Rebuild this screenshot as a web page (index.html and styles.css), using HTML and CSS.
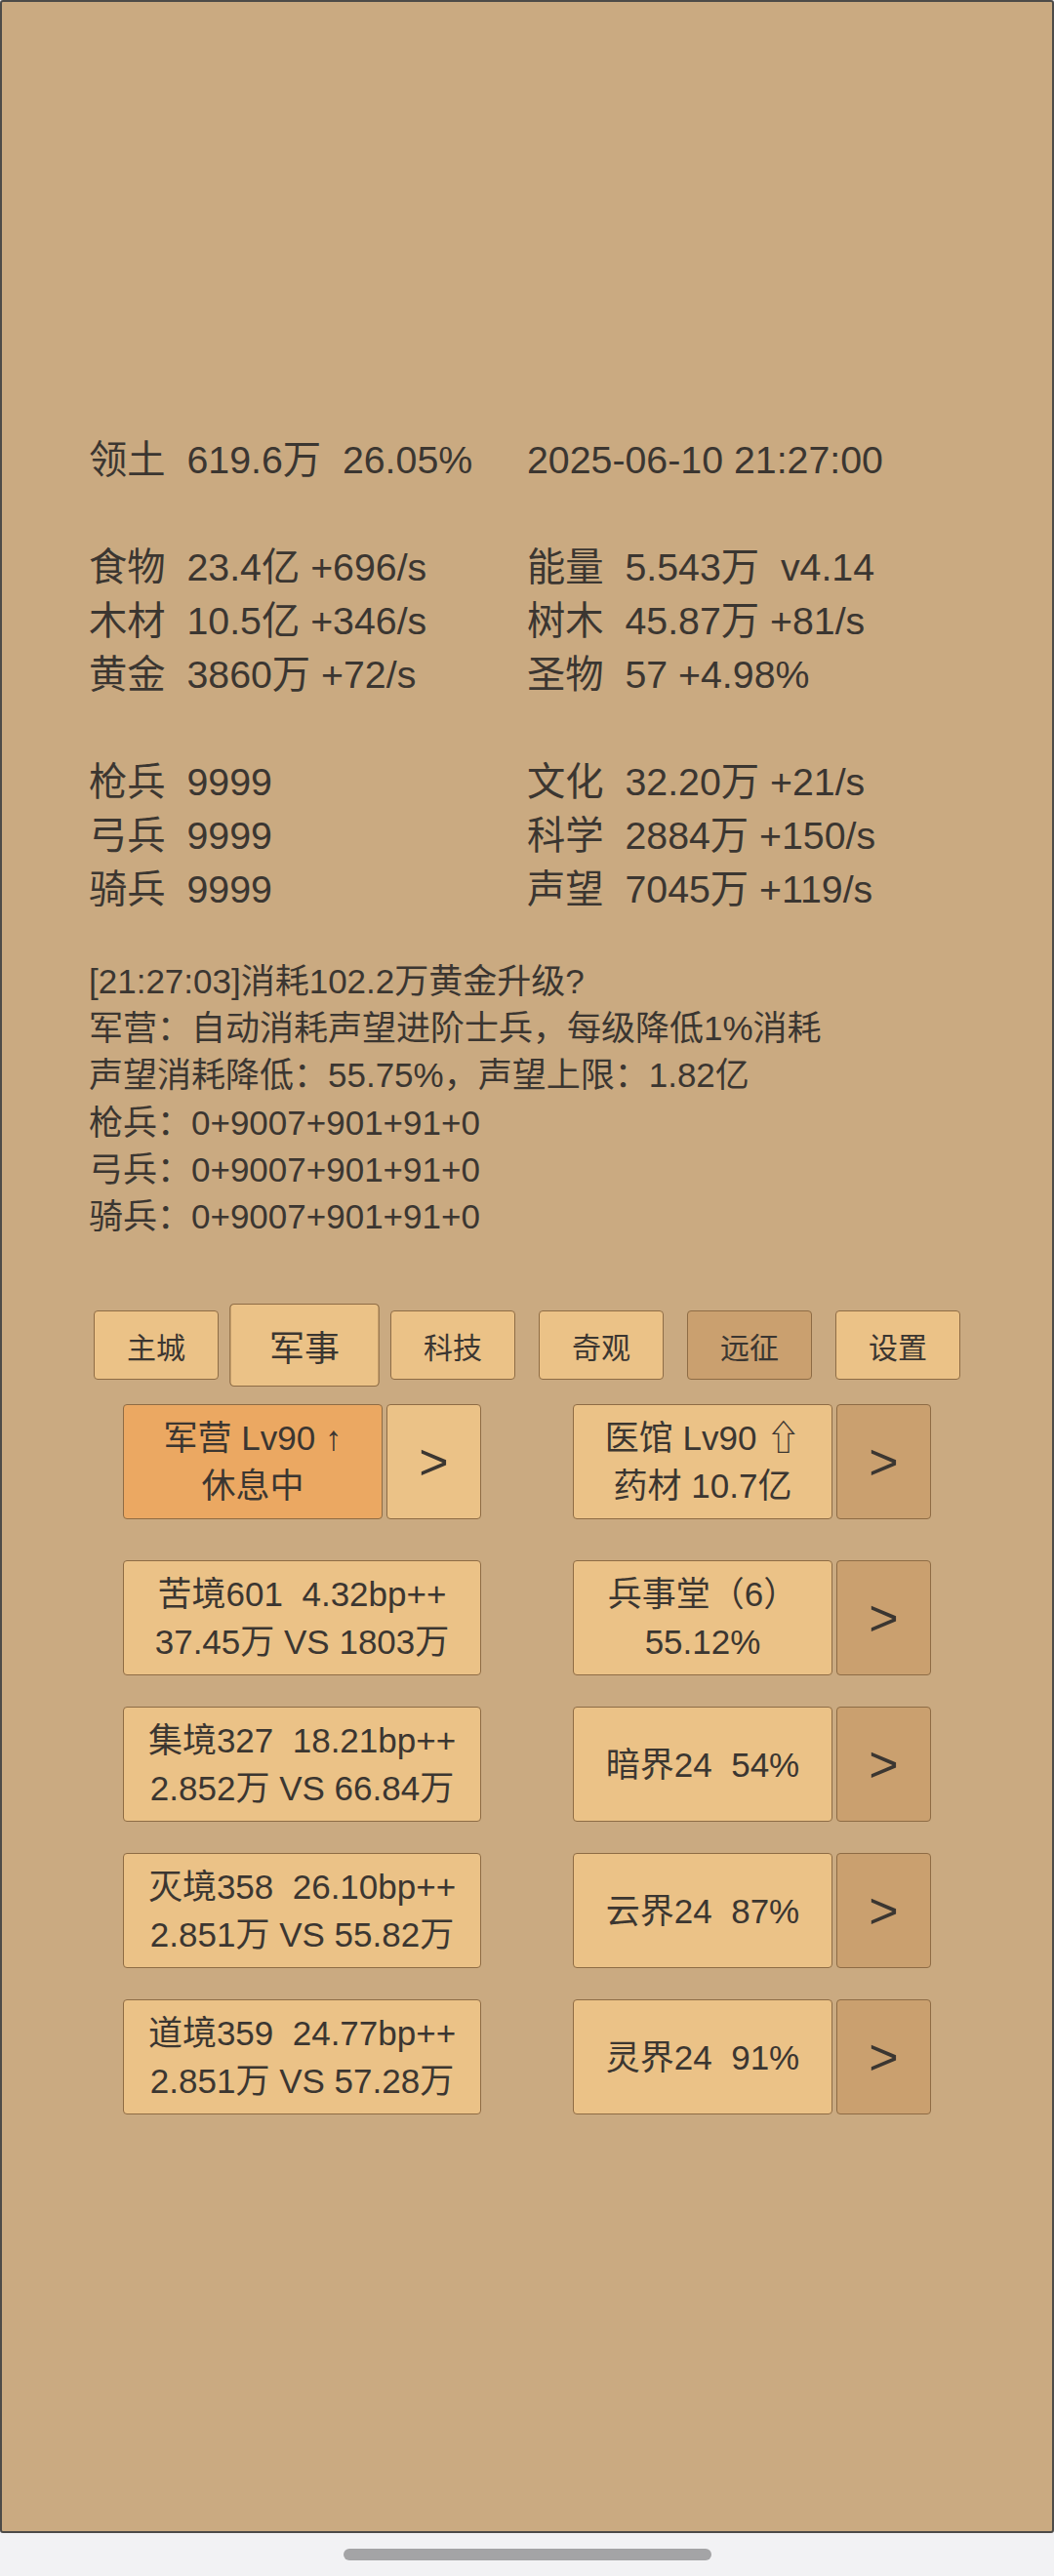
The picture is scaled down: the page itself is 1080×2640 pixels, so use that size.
FILE: index.html
```html
<!DOCTYPE html>
<html lang="zh-CN">
<head>
<meta charset="utf-8">
<title>军事</title>
<link rel="stylesheet" href="styles.css">
</head>
<body>
<div class="panel">
  <div class="stats">
    <div class="row"><span>领土  619.6万  26.05%</span><span>2025-06-10 21:27:00</span></div>
    <div class="row blank"></div>
    <div class="row"><span>食物  23.4亿 +696/s</span><span>能量  5.543万  v4.14</span></div>
    <div class="row"><span>木材  10.5亿 +346/s</span><span>树木  45.87万 +81/s</span></div>
    <div class="row"><span>黄金  3860万 +72/s</span><span>圣物  57 +4.98%</span></div>
    <div class="row blank"></div>
    <div class="row"><span>枪兵  9999</span><span>文化  32.20万 +21/s</span></div>
    <div class="row"><span>弓兵  9999</span><span>科学  2884万 +150/s</span></div>
    <div class="row"><span>骑兵  9999</span><span>声望  7045万 +119/s</span></div>
  </div>

  <div class="log">
    <div>[21:27:03]消耗102.2万黄金升级?</div>
    <div>军营：自动消耗声望进阶士兵，每级降低1%消耗</div>
    <div>声望消耗降低：55.75%，声望上限：1.82亿</div>
    <div>枪兵：0+9007+901+91+0</div>
    <div>弓兵：0+9007+901+91+0</div>
    <div>骑兵：0+9007+901+91+0</div>
  </div>

  <div class="tabs">
    <div class="tab">主城</div>
    <div class="tab active">军事</div>
    <div class="tab">科技</div>
    <div class="tab">奇观</div>
    <div class="tab dim">远征</div>
    <div class="tab">设置</div>
  </div>

  <div class="buildings">
    <div class="group first">
      <div class="box orange"><div>军营 Lv90 ↑</div><div>休息中</div></div>
      <div class="arrow">&gt;</div>
    </div>
    <div class="group first">
      <div class="box"><div>医馆 Lv90 ⇧</div><div>药材 10.7亿</div></div>
      <div class="arrow dark">&gt;</div>
    </div>

    <div class="group">
      <div class="box"><div>苦境601  4.32bp++</div><div>37.45万 VS 1803万</div></div>
    </div>
    <div class="group">
      <div class="box"><div>兵事堂（6）</div><div>55.12%</div></div>
      <div class="arrow dark">&gt;</div>
    </div>

    <div class="group">
      <div class="box"><div>集境327  18.21bp++</div><div>2.852万 VS 66.84万</div></div>
    </div>
    <div class="group">
      <div class="box"><div>暗界24  54%</div></div>
      <div class="arrow dark">&gt;</div>
    </div>

    <div class="group">
      <div class="box"><div>灭境358  26.10bp++</div><div>2.851万 VS 55.82万</div></div>
    </div>
    <div class="group">
      <div class="box"><div>云界24  87%</div></div>
      <div class="arrow dark">&gt;</div>
    </div>

    <div class="group">
      <div class="box"><div>道境359  24.77bp++</div><div>2.851万 VS 57.28万</div></div>
    </div>
    <div class="group">
      <div class="box"><div>灵界24  91%</div></div>
      <div class="arrow dark">&gt;</div>
    </div>
  </div>
</div>
<div class="navbar"><div class="pill"></div></div>
</body>
</html>
```
FILE: styles.css
```css
* { box-sizing: border-box; }

html, body {
  margin: 0;
  padding: 0;
}

body {
  width: 1080px;
  height: 2640px;
  background: #f2f2f4;
  font-family: "Liberation Sans", "Noto Sans CJK SC", sans-serif;
  color: #3b3631;
  overflow: hidden;
}

.panel {
  width: 1080px;
  height: 2596px;
  background: #caaa81;
  border: 2px solid #4d4b48;
  border-radius: 3px;
  padding-top: 442px;
  overflow: hidden;
}

.stats {
  width: 898px;
  margin: 0 auto;
  font-size: 39.3px;
  line-height: 55px;
}

.row {
  display: grid;
  grid-template-columns: 449px 1fr;
  white-space: pre;
  height: 55px;
}

.log {
  width: 898px;
  margin: 43px auto 0;
  font-size: 35px;
  line-height: 48.2px;
}

.tabs {
  display: flex;
  justify-content: center;
  gap: 24px;
  margin-top: 72px;
}

.tab {
  width: 128px;
  height: 71px;
  display: flex;
  align-items: center;
  justify-content: center;
  background: #ebc287;
  border: 1.5px solid #8e6c45;
  border-radius: 4px;
  font-size: 30px;
}

.tab.active {
  transform: scale(1.2);
}

.tab.dim {
  background: #caa06f;
}

.buildings {
  display: grid;
  grid-template-columns: 367px 367px;
  column-gap: 94px;
  row-gap: 32px;
  justify-content: center;
  margin-top: 25px;
}

.group {
  display: flex;
  gap: 4px;
  height: 118px;
}

.group.first {
  margin-bottom: 10px;
}

.box {
  flex: 1;
  display: flex;
  flex-direction: column;
  align-items: center;
  justify-content: center;
  background: #ebc287;
  border: 1.5px solid #8e6c45;
  border-radius: 4px;
  font-size: 35px;
  line-height: 49px;
  white-space: pre;
}

.box.orange {
  background: #eba862;
}

.arrow {
  width: 97px;
  flex: none;
  display: flex;
  align-items: center;
  justify-content: center;
  background: #ebc287;
  border: 1.5px solid #8e6c45;
  border-radius: 4px;
  font-size: 52px;
}

.arrow.dark {
  background: #caa06f;
}

.navbar {
  height: 44px;
  display: flex;
  justify-content: center;
  padding-top: 16px;
}

.pill {
  width: 377px;
  height: 12px;
  border-radius: 6px;
  background: #a4a4a6;
}
```
